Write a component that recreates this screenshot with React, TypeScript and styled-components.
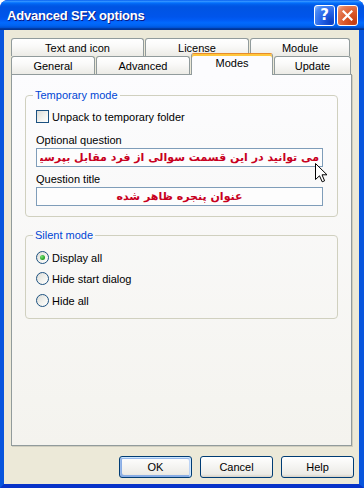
import React from 'react';
import styled, { createGlobalStyle } from 'styled-components';

const GlobalStyle = createGlobalStyle`
  html, body {
    margin: 0;
    padding: 0;
    background: #ffffff;
  }
  body {
    font-family: 'Liberation Sans', Arial, sans-serif;
    font-size: 11px;
    color: #000;
  }
`;

const Window = styled.div`
  width: 364px;
  height: 488px;
  display: flex;
  flex-direction: column;
  border-radius: 8px 8px 0 0;
  overflow: hidden;
  background: #0831d9;
`;

const TitleBar = styled.div`
  height: 30px;
  flex: none;
  display: flex;
  align-items: center;
  padding: 0 6px 0 7px;
  box-sizing: border-box;
  background: linear-gradient(
    to bottom,
    #0058ee 0%,
    #3593ff 4%,
    #288eff 6%,
    #127dff 8%,
    #036ffc 10%,
    #0262ee 14%,
    #0057e5 20%,
    #0054e3 24%,
    #0055eb 56%,
    #005bf5 66%,
    #026afe 76%,
    #0062ef 86%,
    #0052d6 92%,
    #0040ab 94%,
    #003092 100%
  );
`;

const Title = styled.div`
  flex: 1;
  color: #ffffff;
  font-family: 'Liberation Sans', Arial, sans-serif;
  font-weight: bold;
  font-size: 13px;
  letter-spacing: -0.2px;
  text-shadow: 1px 1px 0 #0a1883;
  padding-top: 1px;
`;

const CaptionButton = styled.div<{ $close?: boolean }>`
  width: 21px;
  height: 21px;
  box-sizing: border-box;
  margin-left: ${(p) => (p.$close ? '2px' : '0')};
  border: 1px solid #ffffff;
  border-radius: 3px;
  display: flex;
  align-items: center;
  justify-content: center;
  color: #ffffff;
  font-weight: bold;
  font-size: 15px;
  font-family: 'DejaVu Sans', sans-serif;
  background: ${(p) =>
    p.$close
      ? 'radial-gradient(circle at 85% 85%, #c43c10 0%, #dc5a2c 45%, #e5805b 80%, #f5b9a0 100%)'
      : 'radial-gradient(circle at 85% 85%, #0a3fc4 0%, #2663e8 45%, #4a8af5 80%, #9bc0fb 100%)'};
`;

const Frame = styled.div`
  flex: 1;
  display: flex;
  border-left: 4px solid #0855dd;
  border-right: 5px solid #0855dd;
  border-bottom: 4px solid #0733c8;
  box-shadow: inset 1px 0 0 #166aee;
`;

const Client = styled.div`
  flex: 1;
  background: #ece9d8;
  padding: 8px 0 0 7px;
  display: flex;
  flex-direction: column;
`;

const TabRow = styled.div<{ $top?: number }>`
  display: flex;
  align-items: flex-end;
  gap: 1px;
  height: ${(p) => (p.$top ? 17 : 18)}px;
  margin-top: ${(p) => p.$top ?? 0}px;
`;

const Tab = styled.div<{ $w: number; $active?: boolean }>`
  width: ${(p) => p.$w}px;
  height: ${(p) => (p.$active ? 22 : 18)}px;
  box-sizing: border-box;
  border: 1px solid #919b9c;
  border-bottom: none;
  border-radius: 3px 3px 0 0;
  display: flex;
  align-items: center;
  justify-content: center;
  font-size: 11px;
  position: relative;
  z-index: ${(p) => (p.$active ? 2 : 0)};
  margin-bottom: ${(p) => (p.$active ? '-1px' : '0')};
  padding-bottom: ${(p) => (p.$active ? '4px' : '0')};
  border-top-color: ${(p) => (p.$active ? '#e68b2c' : '#919b9c')};
  box-shadow: ${(p) => (p.$active ? 'inset 0 2px 0 #ffc73c' : 'none')};
  background: ${(p) =>
    p.$active ? '#fcfcfe' : 'linear-gradient(to bottom, #ffffff 0%, #fafaf9 40%, #ecebe6 100%)'};
`;

const Panel = styled.div`
  width: 341px;
  height: 372px;
  box-sizing: border-box;
  border: 1px solid #919b9c;
  box-shadow: 1px 1px 0 #d0cebf;
  background: linear-gradient(to bottom, #fcfcfe 0%, #f4f3ee 100%);
  padding: 14px 13px 0 13px;
  position: relative;
  z-index: 1;
`;

const Group = styled.fieldset<{ $gapTop?: number; $padBottom: number }>`
  margin: ${(p) => p.$gapTop ?? 0}px 0 0 0;
  min-width: 0;
  width: 313px;
  box-sizing: border-box;
  border: 1px solid #d0d0bf;
  border-radius: 4px;
  padding: 0 10px ${(p) => p.$padBottom}px 10px;
`;

const Legend = styled.legend`
  color: #0046d5;
  font-size: 11px;
  line-height: 13px;
  padding: 0 2px;
  margin-left: -3px;
`;

const CheckRow = styled.label<{ $mt: number }>`
  display: flex;
  align-items: center;
  gap: 3px;
  height: 13px;
  margin-top: ${(p) => p.$mt}px;
`;

const CheckBox = styled.span`
  width: 13px;
  height: 13px;
  box-sizing: border-box;
  border: 1px solid #1c5180;
  background: linear-gradient(135deg, #dcdcd7 0%, #f4f4f0 60%, #ffffff 100%);
`;

const Radio = styled.span<{ $checked?: boolean }>`
  width: 13px;
  height: 13px;
  box-sizing: border-box;
  border-radius: 50%;
  border: 1px solid #1c5180;
  background: linear-gradient(135deg, #dcdcd7 0%, #f4f4f0 60%, #ffffff 100%);
  display: flex;
  align-items: center;
  justify-content: center;
  &::after {
    content: '';
    display: ${(p) => (p.$checked ? 'block' : 'none')};
    width: 5px;
    height: 5px;
    border-radius: 50%;
    background: radial-gradient(circle at 35% 35%, #7be27b 0%, #2aa82a 60%, #1a8a1a 100%);
  }
`;

const FieldLabel = styled.div<{ $mt: number }>`
  height: 13px;
  line-height: 13px;
  margin-top: ${(p) => p.$mt}px;
`;

const InputWrap = styled.div`
  position: relative;
  margin-top: 1px;
  width: 287px;
`;

const TextBox = styled.input<{ $center?: boolean }>`
  display: block;
  width: 287px;
  height: 19px;
  box-sizing: border-box;
  border: 1px solid #7f9db9;
  background: #fdfdfd;
  padding: 0 3px;
  margin: 0;
  color: #c8001e;
  font-family: 'DejaVu Sans', sans-serif;
  font-weight: bold;
  font-size: 11px;
  text-align: ${(p) => (p.$center ? 'center' : 'right')};
  outline: none;
`;

const Cursor = styled.svg`
  position: absolute;
  left: 279px;
  top: 15px;
  z-index: 3;
`;

const ButtonBar = styled.div`
  display: flex;
  justify-content: flex-end;
  gap: 8px;
  margin-top: 10px;
  padding-right: 5px;
`;

const Button = styled.div<{ $default?: boolean }>`
  width: 73px;
  height: 22px;
  box-sizing: border-box;
  border: 1px solid #003c74;
  border-radius: 3px;
  display: flex;
  align-items: center;
  justify-content: center;
  font-size: 11px;
  background: linear-gradient(to bottom, #ffffff 0%, #ecebe6 86%, #d6d0c5 100%);
  box-shadow: ${(p) =>
    p.$default
      ? 'inset -1px 1px #cee7ff, inset 1px 2px #98b8ea, inset -2px 2px #bcd4f6, inset 1px -1px #89ade4, inset 2px -2px #89ade4'
      : 'none'};
`;

export default function App() {
  return (
    <>
      <GlobalStyle />
      <Window>
        <TitleBar>
          <Title>Advanced SFX options</Title>
          <CaptionButton>?</CaptionButton>
          <CaptionButton $close>
            <svg width="11" height="11" viewBox="0 0 11 11">
              <path d="M1.5 1.5 L9.5 9.5 M9.5 1.5 L1.5 9.5" stroke="#fff" strokeWidth="2.2" strokeLinecap="square" />
            </svg>
          </CaptionButton>
        </TitleBar>
        <Frame>
          <Client>
            <TabRow>
              <Tab $w={133}>Text and icon</Tab>
              <Tab $w={104}>License</Tab>
              <Tab $w={100}>Module</Tab>
            </TabRow>
            <TabRow $top={1}>
              <Tab $w={84}>General</Tab>
              <Tab $w={94}>Advanced</Tab>
              <Tab $w={82} $active>Modes</Tab>
              <Tab $w={77}>Update</Tab>
            </TabRow>
            <Panel>
              <Group $padBottom={10}>
                <Legend>Temporary mode</Legend>
                <CheckRow $mt={8}>
                  <CheckBox />
                  <span>Unpack to temporary folder</span>
                </CheckRow>
                <FieldLabel $mt={11}>Optional question</FieldLabel>
                <InputWrap>
                  <TextBox dir="rtl" readOnly value="می توانید در این قسمت سوالی از فرد مقابل بپرسید" />
                  <Cursor width="13" height="20" viewBox="0 0 13 20">
                    <path
                      d="M0.5 0.5 L0.5 16.5 L4.5 12.8 L7.2 18.8 L9.6 17.8 L7 11.8 L12 11.8 Z"
                      fill="#fff"
                      stroke="#000"
                      strokeWidth="1"
                      strokeLinejoin="miter"
                    />
                  </Cursor>
                </InputWrap>
                <FieldLabel $mt={6}>Question title</FieldLabel>
                <InputWrap>
                  <TextBox dir="rtl" $center readOnly value="عنوان پنجره ظاهر شده" />
                </InputWrap>
              </Group>
              <Group $gapTop={12} $padBottom={11}>
                <Legend>Silent mode</Legend>
                <CheckRow $mt={9}>
                  <Radio $checked />
                  <span>Display all</span>
                </CheckRow>
                <CheckRow $mt={8}>
                  <Radio />
                  <span>Hide start dialog</span>
                </CheckRow>
                <CheckRow $mt={9}>
                  <Radio />
                  <span>Hide all</span>
                </CheckRow>
              </Group>
            </Panel>
            <ButtonBar>
              <Button $default>OK</Button>
              <Button>Cancel</Button>
              <Button>Help</Button>
            </ButtonBar>
          </Client>
        </Frame>
      </Window>
    </>
  );
}
